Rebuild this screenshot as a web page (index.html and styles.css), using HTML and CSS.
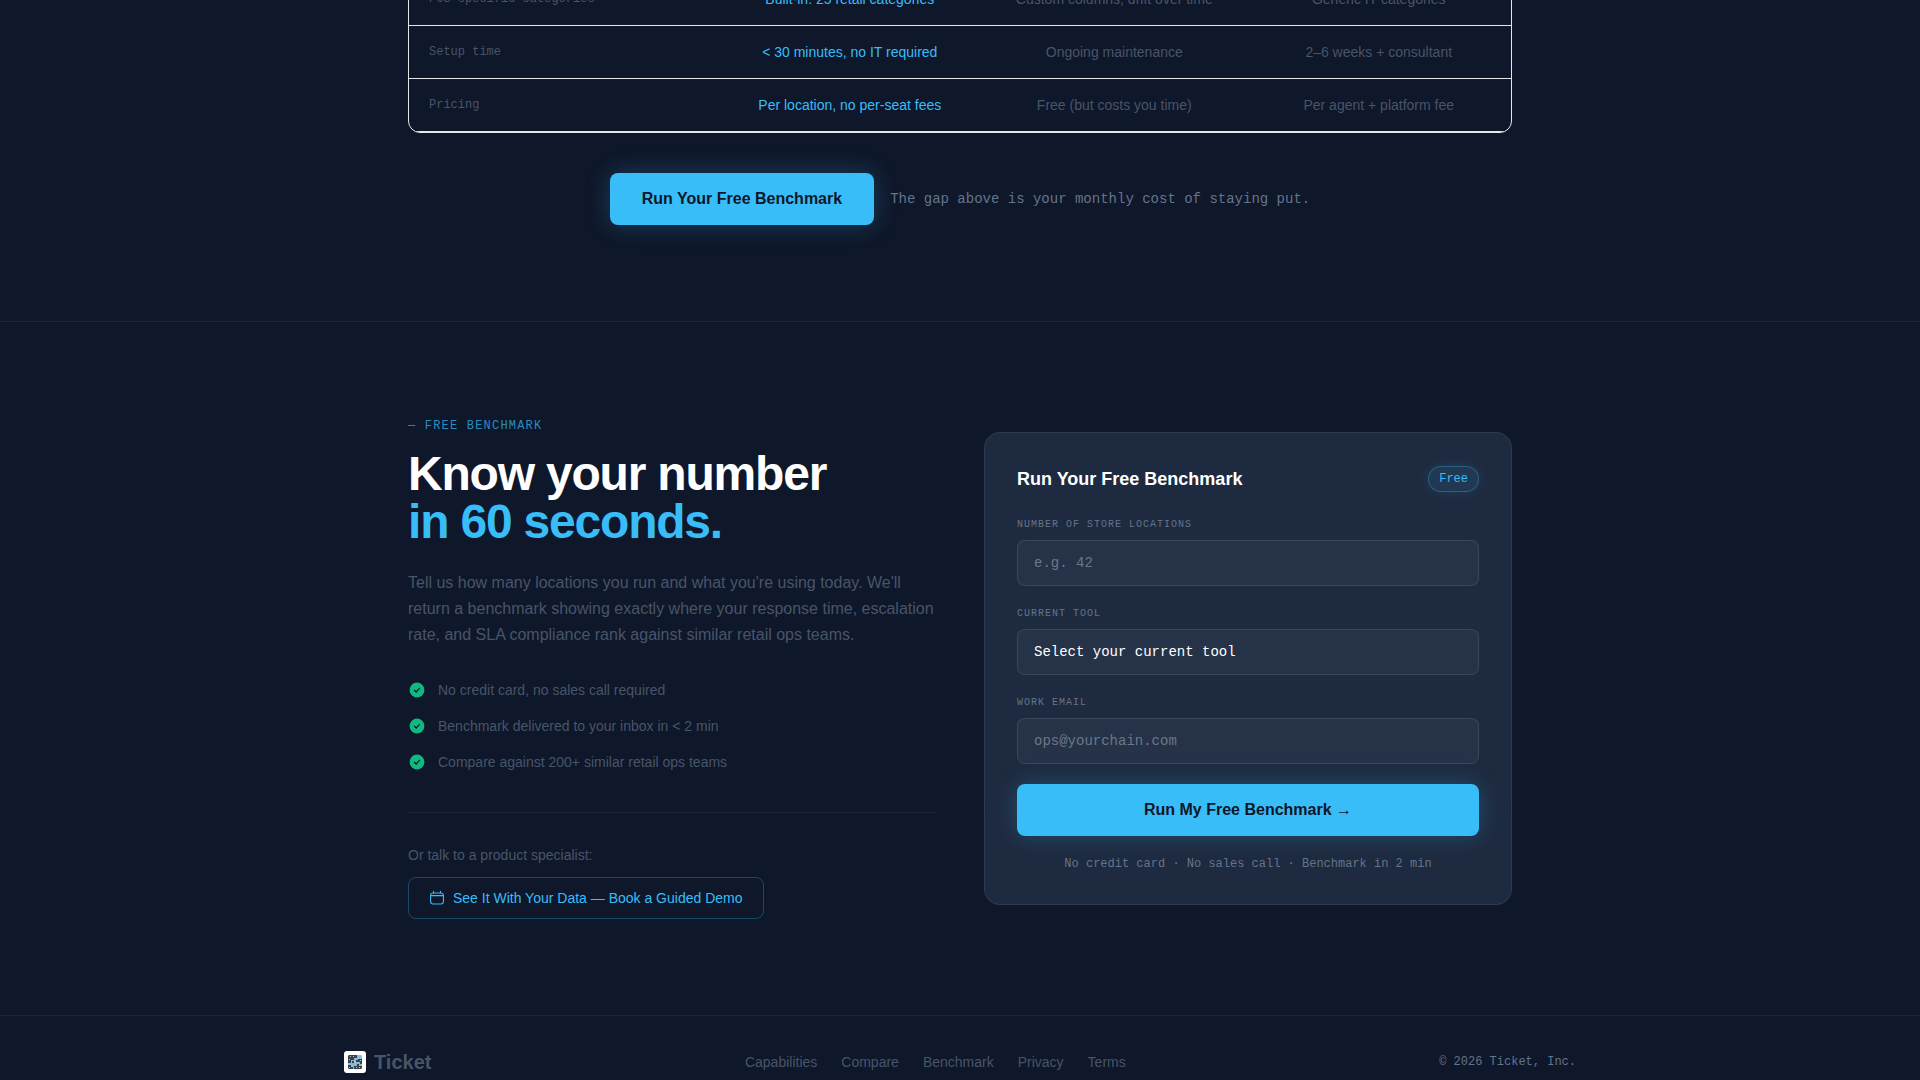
FILE: index.html
```html
<!DOCTYPE html>
<html lang="en">
<head>
<meta charset="utf-8">
<meta name="viewport" content="width=device-width, initial-scale=1">
<title>Ticket</title>
<link rel="stylesheet" href="styles.css">
</head>
<body>
<main>
  <section class="compare" id="compare">
    <div class="container">
      <div class="table-box">
        <table class="compare-table">
          <colgroup><col class="col-label"><col class="col-value"><col class="col-value"><col class="col-value"></colgroup>
          <tbody>
            <tr><th scope="row">POS-specific categories</th><td class="ours">Built-in: 25 retail categories</td><td>Custom columns, drift over time</td><td>Generic IT categories</td></tr>
            <tr><th scope="row">Setup time</th><td class="ours">&lt; 30 minutes, no IT required</td><td>Ongoing maintenance</td><td>2–6 weeks + consultant</td></tr>
            <tr><th scope="row">Pricing</th><td class="ours">Per location, no per-seat fees</td><td>Free (but costs you time)</td><td>Per agent + platform fee</td></tr>
          </tbody>
        </table>
      </div>
      <div class="cta-row">
        <a class="btn-primary" href="#benchmark">Run Your Free Benchmark</a>
        <p class="cta-note">The gap above is your monthly cost of staying put.</p>
      </div>
    </div>
  </section>

  <section class="benchmark" id="benchmark">
    <div class="container benchmark-grid">
      <div class="pitch">
        <p class="eyebrow">— FREE BENCHMARK</p>
        <h2 class="headline">Know your number<br><span class="accent">in 60 seconds.</span></h2>
        <p class="lead">Tell us how many locations you run and what you're using today. We'll return a benchmark showing exactly where your response time, escalation rate, and SLA compliance rank against similar retail ops teams.</p>
        <ul class="perks">
          <li><svg class="check" viewBox="0 0 18 18" aria-hidden="true"><circle cx="9" cy="9" r="7.4"/><path d="M6.4 9.3l1.8 1.7 3.3-3.7"/></svg>No credit card, no sales call required</li>
          <li><svg class="check" viewBox="0 0 18 18" aria-hidden="true"><circle cx="9" cy="9" r="7.4"/><path d="M6.4 9.3l1.8 1.7 3.3-3.7"/></svg>Benchmark delivered to your inbox in &lt; 2 min</li>
          <li><svg class="check" viewBox="0 0 18 18" aria-hidden="true"><circle cx="9" cy="9" r="7.4"/><path d="M6.4 9.3l1.8 1.7 3.3-3.7"/></svg>Compare against 200+ similar retail ops teams</li>
        </ul>
        <div class="specialist">
          <p class="specialist-text">Or talk to a product specialist:</p>
          <a class="btn-outline" href="#demo"><svg class="calendar" viewBox="0 0 16 16" aria-hidden="true"><path d="M4.5 1.2v2M11.5 1.2v2M1.8 5.6h12.4M4 3h8a2.4 2.4 0 0 1 2.4 2.4v6.2A2.4 2.4 0 0 1 12 14H4a2.4 2.4 0 0 1-2.4-2.4V5.4A2.4 2.4 0 0 1 4 3z"/></svg>See It With Your Data — Book a Guided Demo</a>
        </div>
      </div>

      <form class="card">
        <div class="card-head">
          <h3 class="card-title">Run Your Free Benchmark</h3>
          <span class="pill">Free</span>
        </div>
        <div class="field">
          <label for="locations">NUMBER OF STORE LOCATIONS</label>
          <input id="locations" type="text" inputmode="numeric" placeholder="e.g. 42">
        </div>
        <div class="field">
          <label for="tool">CURRENT TOOL</label>
          <select id="tool"><option>Select your current tool</option><option>Spreadsheet</option><option>Generic help desk</option></select>
        </div>
        <div class="field">
          <label for="email">WORK EMAIL</label>
          <input id="email" type="email" placeholder="ops@yourchain.com">
        </div>
        <button class="btn-primary" type="submit">Run My Free Benchmark →</button>
        <p class="card-note">No credit card · No sales call · Benchmark in 2 min</p>
      </form>
    </div>
  </section>
</main>

<footer class="footer">
  <div class="footer-inner">
    <a class="brand" href="#top">
      <svg class="logo" viewBox="0 0 22 22" aria-hidden="true">
        <rect width="22" height="22" rx="3" fill="#fff"/>
        <rect x="4" y="4" width="14" height="14" rx="2" fill="#8fb6c8"/>
        <path fill="#36424f" d="M5 4h8v3h-3v2H7v3H4V5zM14 8h4v5h-2v-2h-2zM4 14h3v2h2v2H5l-1-1zM10 15h3v-2h2v2h3v2l-1 1h-7zM8 10h2v2H8zM12 9h2v2h-2z"/>
        <path fill="#7cc4e6" d="M14 4h3l1 1v2h-2v1h-2zM4 12h3v2H4zM7 14h2v2H7z"/>
        <path fill="#b4c6d0" d="M6 5h1v1H6zM9 5h1v1H9zM5 8h1v1H5zM16 9h1v1h-1zM10 10h2v2h-2zM12 16h1v1h-1zM15 16h1v1h-1zM5 16h1v1H5zM12 7h1v1h-1z"/>
      </svg>
      Ticket
    </a>
    <nav class="footer-nav" aria-label="Footer">
      <a href="#capabilities">Capabilities</a>
      <a href="#compare">Compare</a>
      <a href="#benchmark">Benchmark</a>
      <a href="#privacy">Privacy</a>
      <a href="#terms">Terms</a>
    </nav>
    <p class="copyright">© 2026 Ticket, Inc.</p>
  </div>
</footer>
</body>
</html>
```
FILE: styles.css
```css
:root {
  --bg: #0f172a;
  --sky: #38bdf8;
  --muted: #475569;
  --soft: #64748b;
  --line: rgba(255, 255, 255, 0.06);
  --mono: "Liberation Mono", monospace;
}

*,
*::before,
*::after {
  box-sizing: border-box;
}

html {
  scrollbar-width: none;
}

body {
  margin: 0;
  overflow-x: hidden;
  background: var(--bg);
  color: #fff;
  font-family: "Liberation Sans", Arial, sans-serif;
  font-size: 14px;
  line-height: 20px;
}

h2, h3, p, ul {
  margin: 0;
  padding: 0;
}

a {
  color: inherit;
  text-decoration: none;
}

svg {
  flex: none;
}

.container {
  max-width: 1152px;
  margin: 0 auto;
  padding: 0 24px;
}

/* Comparison table */
.compare {
  margin-top: -28px;
  padding-bottom: 96px;
}

.table-box {
  overflow: hidden;
  border: 1px solid #e5e7eb;
  border-radius: 12px;
}

.compare-table {
  width: 100%;
  table-layout: fixed;
  border-collapse: separate;
  border-spacing: 0;
}

.col-label {
  width: 28%;
}

.col-value {
  width: 24%;
}

.compare-table th,
.compare-table td {
  padding: 16px 20px;
  border-bottom: 1px solid #e5e7eb;
  color: var(--muted);
  font-weight: 400;
  text-align: center;
}

.compare-table th {
  font-family: var(--mono);
  font-size: 12px;
  line-height: 16px;
  text-align: left;
}

.compare-table .ours {
  color: var(--sky);
}

.cta-row {
  display: flex;
  flex-wrap: wrap;
  align-items: center;
  justify-content: center;
  gap: 16px;
  margin-top: 40px;
}

.btn-primary {
  padding: 14px 32px;
  border: 0;
  border-radius: 8px;
  background: var(--sky);
  box-shadow: 0 0 24px rgba(56, 189, 248, 0.25);
  color: var(--bg);
  font: 700 16px/24px "Liberation Sans", Arial, sans-serif;
  text-align: center;
  cursor: pointer;
}

.cta-note {
  color: var(--soft);
  font-family: var(--mono);
}

/* Benchmark */
.benchmark {
  padding: 96px 0;
  border-top: 1px solid var(--line);
}

.benchmark-grid {
  display: grid;
  grid-template-columns: 1fr 1fr;
  gap: 48px;
  align-items: center;
}

.eyebrow {
  margin-bottom: 16px;
  color: var(--sky);
  font-family: var(--mono);
  font-size: 12px;
  line-height: 16px;
  letter-spacing: 0.1em;
  opacity: 0.7;
}

.headline {
  margin-bottom: 24px;
  font-size: 48px;
  line-height: 48px;
  letter-spacing: -0.025em;
}

.accent {
  color: var(--sky);
}

.lead {
  margin-bottom: 32px;
  color: var(--muted);
  font-size: 16px;
  line-height: 26px;
}

.perks {
  display: grid;
  gap: 16px;
  margin-bottom: 40px;
  color: var(--muted);
  list-style: none;
}

.perks li {
  display: flex;
  align-items: center;
  gap: 12px;
}

.check {
  width: 18px;
  height: 18px;
}

.check circle {
  fill: #10b981;
}

.check path {
  fill: none;
  stroke: var(--bg);
  stroke-width: 1.2;
  stroke-linecap: round;
  stroke-linejoin: round;
}

.specialist {
  display: flex;
  flex-direction: column;
  align-items: flex-start;
  gap: 12px;
  padding-top: 32px;
  border-top: 1px solid var(--line);
}

.specialist-text {
  color: var(--muted);
}

.btn-outline {
  display: inline-flex;
  align-items: center;
  gap: 8px;
  padding: 10px 20px;
  border: 1px solid rgba(56, 189, 248, 0.3);
  border-radius: 8px;
  color: var(--sky);
}

.calendar {
  width: 16px;
  height: 16px;
  fill: none;
  stroke: currentColor;
  stroke-width: 1.1;
  stroke-linecap: round;
}

.card {
  display: flex;
  flex-direction: column;
  gap: 20px;
  padding: 32px;
  border: 1px solid rgba(255, 255, 255, 0.08);
  border-radius: 16px;
  background: #1e2a3f;
}

.card-head {
  display: flex;
  align-items: center;
  justify-content: space-between;
  margin-bottom: 4px;
}

.card-title {
  font-size: 18px;
  line-height: 28px;
}

.pill {
  padding: 4px 10px;
  border: 1px solid rgba(56, 189, 248, 0.3);
  border-radius: 13px;
  background: rgba(56, 189, 248, 0.1);
  box-shadow: 0 0 12px rgba(56, 189, 248, 0.15);
  color: var(--sky);
  font-family: var(--mono);
  font-size: 12px;
  line-height: 16px;
}

.field {
  display: grid;
  gap: 8px;
}

.field label {
  color: var(--soft);
  font-family: var(--mono);
  font-size: 10px;
  line-height: 15px;
  letter-spacing: 0.1em;
}

.field input,
.field select {
  width: 100%;
  height: 46px;
  padding: 12px 16px;
  border: 1px solid rgba(255, 255, 255, 0.1);
  border-radius: 8px;
  background: #263248;
  color: #fff;
  font: 14px/20px var(--mono);
  appearance: none;
}

.field input::placeholder {
  color: #6b7789;
}

.card-note {
  color: var(--soft);
  font-family: var(--mono);
  font-size: 12px;
  line-height: 16px;
  text-align: center;
}

/* Footer */
.footer {
  border-top: 1px solid var(--line);
  color: var(--muted);
}

.footer-inner {
  display: flex;
  flex-wrap: wrap;
  align-items: center;
  justify-content: space-between;
  gap: 24px;
  max-width: 1280px;
  margin: 0 auto;
  padding: 32px 24px;
}

.brand {
  display: flex;
  align-items: center;
  gap: 8px;
  font-size: 20px;
  font-weight: 700;
  line-height: 28px;
}

.logo {
  width: 22px;
  height: 22px;
}

.footer-nav {
  display: flex;
  gap: 24px;
}

.copyright {
  color: var(--soft);
  font-family: var(--mono);
  font-size: 12px;
  line-height: 16px;
}
```
